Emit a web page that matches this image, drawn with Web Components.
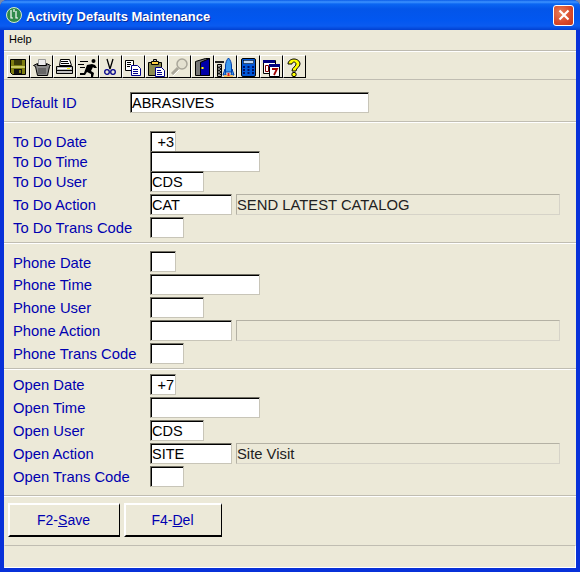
<!DOCTYPE html>
<html>
<head>
<meta charset="utf-8">
<title>Activity Defaults Maintenance</title>
<style>
    html, body { margin: 0; padding: 0; background: #ece9d8; }
</style>
</head>
<body>
<xp-window caption="Activity Defaults Maintenance">
    <xp-toolbar></xp-toolbar>
    <xp-section pad="12px 0 8px">
        <form-row label="Default ID" lx="7" fx="126" fw="239" value="ABRASIVES"></form-row>
    </xp-section>
    <xp-section pad="8px 0 4px">
        <form-row label="To Do Date" fw="26" value="+3" right="1"></form-row>
        <form-row label="To Do Time" fw="110" mt="-1"></form-row>
        <form-row label="To Do User" fw="54" mt="-1" value="CDS"></form-row>
        <form-row label="To Do Action" fw="82" value="CAT" desc="SEND LATEST CATALOG"></form-row>
        <form-row label="To Do Trans Code" fw="34"></form-row>
    </xp-section>
    <xp-section pad="7px 0 4px">
        <form-row label="Phone Date" fw="26" low="1"></form-row>
        <form-row label="Phone Time" fw="110"></form-row>
        <form-row label="Phone User" fw="54"></form-row>
        <form-row label="Phone Action" fw="82" desc=""></form-row>
        <form-row label="Phone Trans Code" fw="34"></form-row>
    </xp-section>
    <xp-section pad="4px 0 8px">
        <form-row label="Open Date" fw="26" value="+7" right="1"></form-row>
        <form-row label="Open Time" fw="110"></form-row>
        <form-row label="Open User" fw="54" value="CDS"></form-row>
        <form-row label="Open Action" fw="82" value="SITE" desc="Site Visit"></form-row>
        <form-row label="Open Trans Code" fw="34"></form-row>
    </xp-section>
    <button-bar>
        <xp-button w="112">F2-<u>S</u>ave</xp-button>
        <xp-button w="98">F4-<u>D</u>el</xp-button>
    </button-bar>
</xp-window>

<script>
// toolbar art, drawn on a 20x20 grid
const TOOL_ICONS = [
    // save
    `<path d="M1.500 1.500h15v15h-13l-2-2z" fill="#7d7d10" stroke="#000"/><rect x="5" y="2" width="8" height="5" fill="#3a3a08"/><rect x="2" y="8" width="14" height="2" fill="#c8c860"/><rect x="5" y="11" width="8" height="5" fill="#111"/><rect x="10" y="12" width="2" height="3" fill="#7d7d10"/>`,
    // basket
    `<path d="M6.500 1.500h7v6h-7z" fill="#ececec" stroke="#999"/><path d="M1.500 7.500l4-2v2h9v-2l4 2-1 1-2 9h-10l-2-9z" fill="#8b8b8b" stroke="#000"/><path d="M6 10h8v6H6z" fill="#666"/>`,
    // printer
    `<g transform="translate(-1 0)"><path d="M6.500 1.500h9l2 6h-12z" fill="#fff" stroke="#000"/><path d="M7 3.500h7M7 5.500h8" stroke="#000"/><path d="M2.500 8.500h16v7h-16z" fill="#c0c0c0" stroke="#000"/><path d="M4 10.500h13" stroke="#fff"/><path d="M3 12.500h15" stroke="#000"/><rect x="13" y="10" width="3" height="1" fill="#ff0"/></g>`,
    // running man
    `<circle cx="15.500" cy="3" r="2"/><path d="M9 7l5-1 3 1 2 3-3 0-1-1-2 4 3 2-1 4h-2l0-3-4-2-2 3-5 0 0-2 4 0z"/><path d="M2 3.500h8M0 6.500h6M2 9.500h5" stroke="#000" fill="none"/>`,
    // scissors
    `<path d="M6 1l3 10M12 1L9 11" stroke="#000" stroke-width="1.300" fill="none"/><circle cx="6" cy="14" r="2.300" fill="none" stroke="#00008b" stroke-width="1.300"/><circle cx="12" cy="14" r="2.300" fill="none" stroke="#00008b" stroke-width="1.300"/>`,
    // copy
    `<g transform="translate(-1 0)"><path d="M2.500 2.500h8v10h-8z" fill="#fff" stroke="#000"/><path d="M4 4.500h4M4 6.500h4M4 8.500h3" stroke="#000"/><path d="M8.500 7.500h6l3 3v7h-9z" fill="#fff" stroke="#00008b"/><path d="M10 11.500h5M10 13.500h5M10 15.500h5" stroke="#00008b"/></g>`,
    // paste
    `<g transform="translate(-1 0)"><path d="M2.500 4.500h13v13h-13z" fill="#8a8a50" stroke="#000"/><path d="M5.500 3.500h7v3h-7z" fill="#ffd040" stroke="#000"/><path d="M7.500 1.500h3v2h-3z" fill="#c0c0c0" stroke="#000"/><path d="M9.500 9.500h6l3 3v6h-9z" fill="#fff" stroke="#00008b"/><path d="M11 12.500h4M11 14.500h5M11 16.500h5" stroke="#00008b"/></g>`,
    // find, greyed out
    `<circle cx="12" cy="6" r="5" fill="#e4e1d0" stroke="#aaa79a" stroke-width="1.500"/><path d="M8 10l-6 6" stroke="#aaa79a" stroke-width="3"/><path d="M9 12l-6 6" stroke="#fff"/>`,
    // door
    `<g transform="translate(0 -1)"><path d="M2.500 4.500l10-3h4v17h-14z" fill="#777" stroke="#000"/><path d="M7.500 5.500l9-4v17h-9z" fill="#0000a8" stroke="#000"/><rect x="8.500" y="10" width="2" height="2" fill="#ff0"/></g>`,
    // tower and rocket
    `<g transform="translate(-2 0)"><path d="M3.500 6.500h4v12h-4z" fill="#bbb" stroke="#000"/><path d="M3 8l4 3M7 8l-4 3M3 11l4 3M7 11l-4 3M3 14l4 3M7 14l-4 3" stroke="#000"/><path d="M1 3h9v2H1z" fill="#222"/><path d="M14.500 0c2 2 3 5 3 8v6h-6V8c0-3 1-6 3-8z" fill="#3c9cf0" stroke="#003ca8"/><path d="M11 11l-2 6h3zM18 11l2 6h-3z" fill="#3c9cf0" stroke="#003ca8"/><path d="M10 17h9v2h-9z" fill="#f4c060"/><path d="M13.500 15h2v3h-2z" fill="#e02020"/></g>`,
    // calculator
    `<g transform="translate(-1 0)"><rect x="3.500" y="0.500" width="14" height="18" rx="1.500" fill="#0058d8" stroke="#000"/><rect x="5.500" y="2.500" width="10" height="3" fill="#bcd8f8" stroke="#000" stroke-width="0.500"/><path d="M5 8h2v2H5zM9.500 8h2v2h-2zM14 8h2v2h-2zM5 11h2v2H5zM9.500 11h2v2h-2zM14 11h2v2h-2zM5 14h2v2H5zM9.500 14h2v2h-2zM14 14h2v2h-2z" fill="#001060"/></g>`,
    // calendar
    `<g transform="translate(-1 0)"><path d="M2.500 2.500h12v13h-12z" fill="#fff" stroke="#000"/><path d="M2 2h12v3H2z" fill="#000080"/><path d="M4.500 7.500h3v6h-3z" fill="none" stroke="#800000"/><path d="M8.500 6.500h10v12h-10z" fill="#fff" stroke="#000"/><path d="M8 6h11v3H8z" fill="#000080"/><path d="M11 11h5l-3 6" fill="none" stroke="#a00000" stroke-width="1.800"/></g>`,
    // help
    `<g transform="translate(-1 0)"><path d="M4 6c0-3 3-5 6-5s6 2 6 5c0 3-4 4-4 7H8c0-4 4-4 4-7 0-1-1-2-2-2s-2 1-2 2z" fill="#ffff00" stroke="#000"/><circle cx="10" cy="16.500" r="2.200" fill="#ffff00" stroke="#000"/></g>`
];

class XpWindow extends HTMLElement {
    constructor() {
        super();
        this.attachShadow({ mode: 'open' });
        this.shadowRoot.innerHTML = `
            <style>
                :host { display: block; width: 580px; height: 572px; box-sizing: border-box; font-family: "Liberation Sans", Arial, sans-serif; background: #7a8aa8; }
                .frame { display: flex; flex-direction: column; height: 100%; box-sizing: border-box; background: #0831d9; padding: 0 4px 4px; border-radius: 7px 7px 0 0; overflow: hidden; }
                .title { display: flex; align-items: center; height: 30px; margin: 0 -4px; padding: 0 6px 0 6px; flex: none; color: #fff;
                    background: linear-gradient(#0a5ce8 0, #3d93ff 2px, #0a66f2 4px, #0355e9 9px, #0257f0 20px, #0a5bf0 26px, #0240d0 30px); }
                .logo { width: 16px; height: 16px; margin-right: 4px; margin-top: -1px; flex: none; }
                .cap { font: bold 13px "Liberation Sans", sans-serif; margin-top: 2px; text-shadow: 1px 1px 0 #0a2a9a; flex: 1; white-space: nowrap; }
                .close { width: 21px; height: 21px; box-sizing: border-box; border: 1px solid #fff; border-radius: 3px; background: radial-gradient(circle at 35% 35%, #e8805a, #d8482a 60%, #c0381c); display: flex; align-items: center; justify-content: center; }
                .body { flex: 1; display: flex; flex-direction: column; background: #ece9d8; min-height: 0; }
                .menu { height: 21px; flex: none; box-sizing: border-box; display: flex; align-items: center; padding: 0 0 3px 5px; font: 11px "Liberation Sans", sans-serif; color: #000; border-bottom: 1px solid #bdbab0; box-shadow: 0 1px 0 #fff; }
                .status { flex: 1; border: 1px solid; border-color: #c0bdb2 #fff #fff #ece9d8; }
            </style>
            <div class="frame">
                <div class="title">
                    <svg class="logo" viewBox="0 0 16 16"><circle cx="8" cy="8" r="7.500" fill="#2f8a4a" stroke="#d0e8d0" stroke-width="1"/><path d="M5 3v8h2M10 4v7h2M8 2v3" stroke="#fff" fill="none" stroke-width="1.200"/></svg>
                    <span class="cap"></span>
                    <div class="close"><svg width="12" height="12" viewBox="0 0 12 12"><path d="M1.500 1.500l9 9M10.500 1.500l-9 9" stroke="#fff" stroke-width="2.200"/></svg></div>
                </div>
                <div class="body">
                    <div class="menu">Help</div>
                    <slot></slot>
                    <div class="status"></div>
                </div>
            </div>`;
        this.shadowRoot.querySelector('.cap').textContent = this.getAttribute('caption');
    }
}

class XpToolbar extends HTMLElement {
    constructor() {
        super();
        this.attachShadow({ mode: 'open' });
        let buttons = '';
        for (let i = 0; i < TOOL_ICONS.length; ++i) {
            buttons += `<div class="tb"><svg width="20" height="20" viewBox="0 -1 20 20">${TOOL_ICONS[i]}</svg></div>`;
        }
        this.shadowRoot.innerHTML = `
            <style>
                :host { display: flex; flex: none; height: 29px; box-sizing: border-box; padding: 4px 0 0 3px; border-bottom: 1px solid #c0bdb2; }
                .tb { width: 23px; height: 23px; box-sizing: border-box; border: 1px solid; border-color: #fff #000 #000 #fff; display: flex; align-items: center; justify-content: center; }
                svg { overflow: visible; }
            </style>${buttons}`;
    }
}

class XpSection extends HTMLElement {
    constructor() {
        super();
        this.attachShadow({ mode: 'open' });
        this.shadowRoot.innerHTML = `
            <style>
                :host { display: flex; flex-direction: column; gap: 2px; flex: none; box-sizing: border-box; border-bottom: 1px solid #c0bdb2; box-shadow: 0 1px 0 #fff; margin-bottom: 1px; padding: ${this.getAttribute('pad')}; }
            </style>
            <slot></slot>`;
    }
}

class FormRow extends HTMLElement {
    constructor() {
        super();
        this.attachShadow({ mode: 'open' });
        let value = this.getAttribute('value') || '';
        let hasDesc = this.hasAttribute('desc');
        let lx = this.getAttribute('lx') || 9;
        let fx = this.getAttribute('fx') || 146;
        // mt is added on top of the 2px section gap, so -1 makes the boxes touch and overlap by a pixel
        let mt = this.getAttribute('mt') ? parseInt(this.getAttribute('mt')) - 2 : 0;
        this.shadowRoot.innerHTML = `
            <style>
                :host { display: flex; align-items: center; margin-top: ${mt}px; height: 21px; }
                label { width: ${fx - lx}px; margin-left: ${lx}px; flex: none; color: #0000b0; font: 14.800px "Liberation Sans", sans-serif; white-space: nowrap; padding-top: ${this.hasAttribute('low') ? 2 : 0}px; }
                .box { box-sizing: border-box; display: flex; align-items: center; width: ${this.getAttribute('fw')}px; height: 100%; flex: none; background: #fff; border: 1px solid; border-color: #716f64 #c8c5b8 #c8c5b8 #716f64; box-shadow: inset 1px 1px 0 #000;
                    padding: 0 1px; font: 14.500px "Liberation Sans", sans-serif; color: #000; white-space: nowrap; overflow: hidden; }
                .box.right { justify-content: flex-end; }
                .desc { box-sizing: border-box; display: flex; align-items: center; margin-left: 4px; width: 324px; height: 100%; flex: none; border: 1px solid; border-color: #b4b1a4 #d6d3c8 #d6d3c8 #b4b1a4; font: 14.800px "Liberation Sans", sans-serif; color: #222; white-space: nowrap; }
            </style>
            <label>${this.getAttribute('label')}</label>
            <div class="box${this.hasAttribute('right') ? ' right' : ''}">${value}</div>
            ${hasDesc ? `<div class="desc">${this.getAttribute('desc')}</div>` : ''}`;
    }
}

class ButtonBar extends HTMLElement {
    constructor() {
        super();
        this.attachShadow({ mode: 'open' });
        this.shadowRoot.innerHTML = `
            <style>
                :host { display: flex; flex: none; gap: 4px; height: 48px; box-sizing: border-box; padding: 6px 0 0 4px; }
            </style>
            <slot></slot>`;
    }
}

class XpButton extends HTMLElement {
    constructor() {
        super();
        this.attachShadow({ mode: 'open' });
        this.shadowRoot.innerHTML = `
            <style>
                :host { display: flex; align-items: center; justify-content: center; box-sizing: border-box; width: ${this.getAttribute('w')}px; height: 34px; padding-right: 2px; border: 2px solid; border-color: #fff #000 #000 #fff; border-right-width: 1px; color: #0000b0; font: 14px "Liberation Sans", sans-serif; }
            </style>
            <slot></slot>`;
    }
}

customElements.define('xp-window', XpWindow);
customElements.define('xp-toolbar', XpToolbar);
customElements.define('xp-section', XpSection);
customElements.define('form-row', FormRow);
customElements.define('button-bar', ButtonBar);
customElements.define('xp-button', XpButton);
</script>
</body>
</html>
